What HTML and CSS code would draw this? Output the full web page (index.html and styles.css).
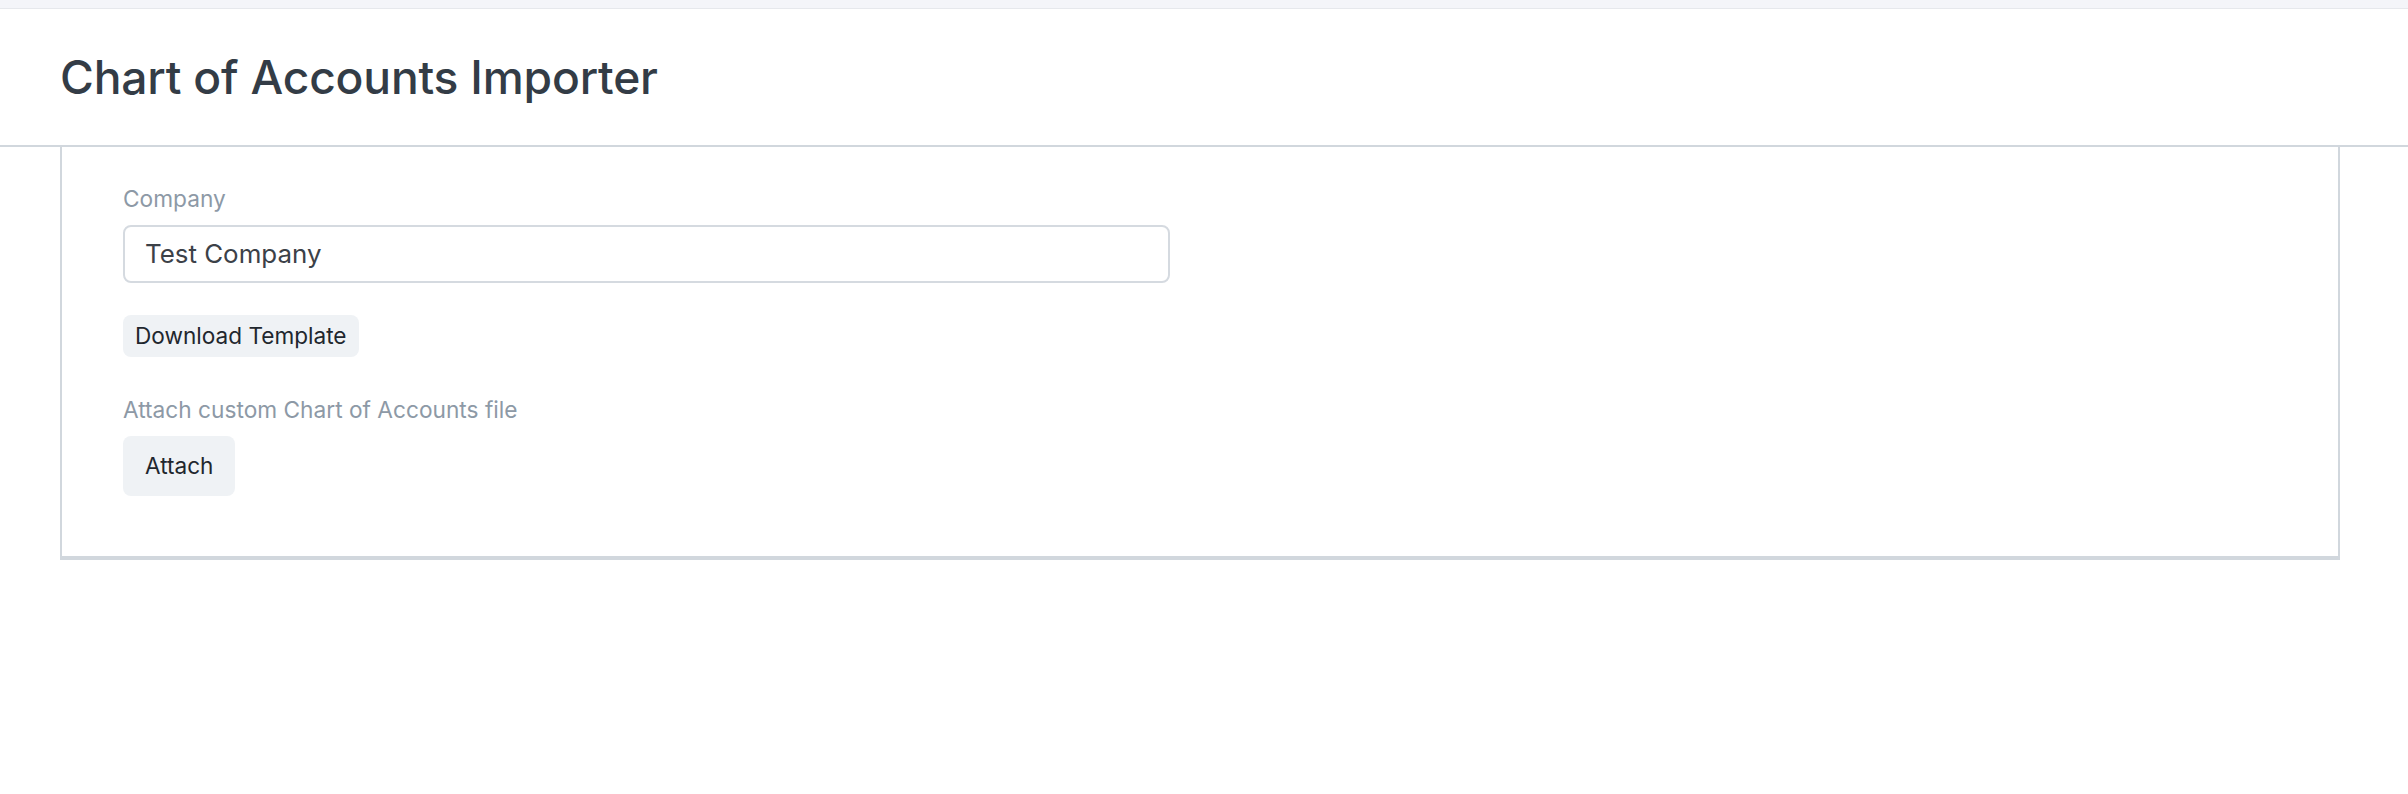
FILE: index.html
```html
<!DOCTYPE html>
<html lang="en">
<head>
<meta charset="utf-8">
<title>Chart of Accounts Importer</title>
<link rel="stylesheet" href="styles.css">
</head>
<body>
<div class="top-strip"></div>
<header class="page-head">
  <h1 class="page-title">Chart of Accounts Importer</h1>
</header>
<main class="card">
  <div class="field">
    <label class="field-label">Company</label>
    <div class="input">Test Company</div>
  </div>
  <div class="field field-btn">
    <button class="btn btn-sm">Download Template</button>
  </div>
  <div class="field">
    <label class="field-label">Attach custom Chart of Accounts file</label>
    <button class="btn btn-attach">Attach</button>
  </div>
</main>
</body>
</html>
```

FILE: styles.css
```css
* { box-sizing: border-box; }
html, body {
  margin: 0;
  padding: 0;
  background: #ffffff;
  font-family: Inter, "Noto Sans", sans-serif;
}
.top-strip {
  height: 9px;
  background: #f4f5f9;
  border-bottom: 1px solid #e6e8ec;
}
.page-head {
  height: 138px;
  display: flex;
  align-items: center;
  padding-left: 60px;
  border-bottom: 2px solid #d1d7dd;
  background: #fff;
}
.page-title {
  margin: 0;
  font-size: 46.2px;
  font-weight: 500;
  color: #333c46;
  letter-spacing: -0.2px;
}
.card {
  margin-left: 60px;
  width: 2280px;
  border-left: 2px solid #d1d7dd;
  border-right: 2px solid #d1d7dd;
  border-bottom: 4px solid #d1d7dd;
  padding: 34.5px 61px 60.5px;
  display: flex;
  flex-direction: column;
}
.field {
  display: flex;
  flex-direction: column;
  align-items: flex-start;
}
.field-btn {
  margin-top: 32px;
  margin-bottom: 36px;
}
.field-label {
  font-size: 22.7px;
  line-height: 33px;
  color: #8d99a6;
  margin-bottom: 10px;
}
.input {
  width: 1047px;
  height: 58px;
  border: 2px solid #d5dae0;
  border-radius: 8px;
  padding: 0 20px;
  display: flex;
  align-items: center;
  font-size: 25.9px;
  color: #3c4148;
}
.btn {
  font-family: inherit;
  border: none;
  background: #eff2f5;
  color: #1f272e;
  border-radius: 8px;
  cursor: pointer;
}
.btn-sm {
  height: 42px;
  padding: 0 12px;
  font-size: 22.6px;
}
.btn-attach {
  height: 60px;
  padding: 0 22px;
  font-size: 22.6px;
}
```
